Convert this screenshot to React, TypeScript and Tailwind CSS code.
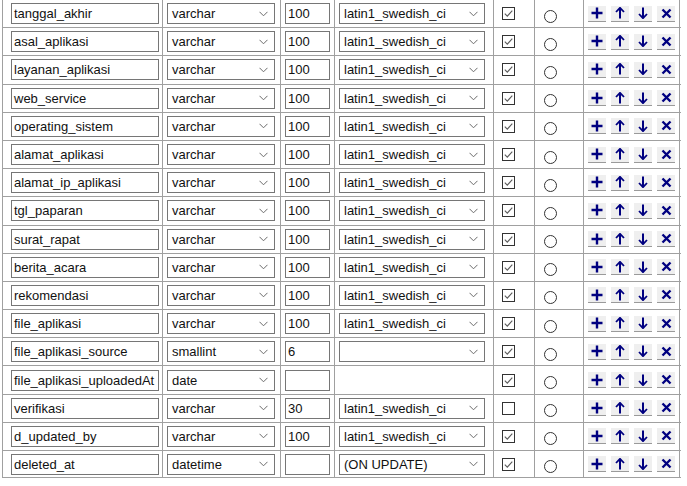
import React from "react";

type Row = {
  name: string;
  type: string;
  len: string;
  coll: string | null; // null = no select
  nul: boolean;
};

const rows: Row[] = [
  { name: "tanggal_akhir", type: "varchar", len: "100", coll: "latin1_swedish_ci", nul: true },
  { name: "asal_aplikasi", type: "varchar", len: "100", coll: "latin1_swedish_ci", nul: true },
  { name: "layanan_aplikasi", type: "varchar", len: "100", coll: "latin1_swedish_ci", nul: true },
  { name: "web_service", type: "varchar", len: "100", coll: "latin1_swedish_ci", nul: true },
  { name: "operating_sistem", type: "varchar", len: "100", coll: "latin1_swedish_ci", nul: true },
  { name: "alamat_aplikasi", type: "varchar", len: "100", coll: "latin1_swedish_ci", nul: true },
  { name: "alamat_ip_aplikasi", type: "varchar", len: "100", coll: "latin1_swedish_ci", nul: true },
  { name: "tgl_paparan", type: "varchar", len: "100", coll: "latin1_swedish_ci", nul: true },
  { name: "surat_rapat", type: "varchar", len: "100", coll: "latin1_swedish_ci", nul: true },
  { name: "berita_acara", type: "varchar", len: "100", coll: "latin1_swedish_ci", nul: true },
  { name: "rekomendasi", type: "varchar", len: "100", coll: "latin1_swedish_ci", nul: true },
  { name: "file_aplikasi", type: "varchar", len: "100", coll: "latin1_swedish_ci", nul: true },
  { name: "file_aplikasi_source", type: "smallint", len: "6", coll: "", nul: true },
  { name: "file_aplikasi_uploadedAt", type: "date", len: "", coll: null, nul: true },
  { name: "verifikasi", type: "varchar", len: "30", coll: "latin1_swedish_ci", nul: false },
  { name: "d_updated_by", type: "varchar", len: "100", coll: "latin1_swedish_ci", nul: true },
  { name: "deleted_at", type: "datetime", len: "", coll: "(ON UPDATE)", nul: true },
];

const font = { fontFamily: '"Liberation Sans", Arial, sans-serif' };

function Chevron() {
  return (
    <svg width="9" height="6" viewBox="0 0 9 6" className="absolute right-[6px] top-1/2 -translate-y-1/2">
      <path d="M0.5 0.8 L4.5 4.8 L8.5 0.8" fill="none" stroke="#6b6b6b" strokeWidth="1" />
    </svg>
  );
}

function SelectBox({ text, w }: { text: string; w: string }) {
  return (
    <div className={`relative h-[21px] ${w} border border-[#767676] bg-white text-[13px] leading-[19px] pl-[4px] text-[#111] whitespace-nowrap`}>
      {text}
      <Chevron />
    </div>
  );
}

function TextBox({ text, w }: { text: string; w: string }) {
  return (
    <div className={`h-[21px] ${w} border border-[#767676] bg-white text-[13px] leading-[19px] pl-[2px] text-[#111] whitespace-nowrap`}>
      {text}
    </div>
  );
}

function Check({ on }: { on: boolean }) {
  return (
    <div className="w-[13px] h-[13px] border border-[#333333] bg-white flex items-center justify-center">
      {on && (
        <svg width="11" height="11" viewBox="0 0 11 11">
          <path d="M1.8 5.6 L4.3 8.1 L9.3 2.6" fill="none" stroke="#5a5a5a" strokeWidth="1.1" />
        </svg>
      )}
    </div>
  );
}

function Radio() {
  return <div className="w-[13px] h-[13px] rounded-full border border-[#333333] bg-white mt-[5px]" />;
}

function Btn({ children }: { children: React.ReactNode }) {
  return (
    <div className="w-[18px] h-[16px] bg-[#efefef] border-b border-[#9a9a9a] flex items-center justify-center">
      {children}
    </div>
  );
}

const navy = "#000080";

function Plus() {
  return (
    <svg width="12" height="12" viewBox="0 0 12 12">
      <path d="M6 0.5 V11.5 M0.5 6 H11.5" stroke={navy} strokeWidth="2.4" />
    </svg>
  );
}
function Up() {
  return (
    <svg width="10" height="12" viewBox="0 0 10 12">
      <path d="M5 1.5 V11.5" stroke={navy} strokeWidth="2" />
      <path d="M1 5 L5 0.8 L9 5" fill="none" stroke={navy} strokeWidth="1.8" />
    </svg>
  );
}
function Down() {
  return (
    <svg width="10" height="12" viewBox="0 0 10 12">
      <path d="M5 0.5 V10.5" stroke={navy} strokeWidth="2" />
      <path d="M1 7 L5 11.2 L9 7" fill="none" stroke={navy} strokeWidth="1.8" />
    </svg>
  );
}
function Cross() {
  return (
    <svg width="11" height="11" viewBox="0 0 11 11">
      <path d="M1.5 1.5 L9.5 9.5 M9.5 1.5 L1.5 9.5" stroke={navy} strokeWidth="2.4" />
    </svg>
  );
}

export default function App() {
  return (
    <div className="w-[687px] h-[486px] bg-white overflow-hidden" style={font}>
      <div className="ml-[2px] w-[679px] -mt-[1px]">
        {rows.map((r, i) => (
          <div
            key={i}
            className="flex h-[28.19px] border-t border-b-0 border-l border-[#a0a0a0] last:border-b"
          >
            <div className="w-[160px] border-r border-[#a0a0a0] flex items-center pl-[8px]">
              <TextBox text={r.name} w="w-[148px]" />
            </div>
            <div className="w-[118px] border-r border-[#a0a0a0] flex items-center pl-[4px]">
              <SelectBox text={r.type} w="w-[108px]" />
            </div>
            <div className="w-[54px] border-r border-[#a0a0a0] flex items-center pl-[4px]">
              <TextBox text={r.len} w="w-[45px]" />
            </div>
            <div className="w-[159px] border-r border-[#a0a0a0] flex items-center pl-[4px]">
              {r.coll !== null && <SelectBox text={r.coll} w="w-[146px]" />}
            </div>
            <div className="w-[41px] border-r border-[#a0a0a0] flex items-center pl-[8px]">
              <Check on={r.nul} />
            </div>
            <div className="w-[49px] border-r border-[#a0a0a0] flex items-center pl-[9px]">
              <Radio />
            </div>
            <div className="w-[96px] border-r border-[#a0a0a0] flex items-center pl-[4px] gap-[5px]">
              <Btn><Plus /></Btn>
              <Btn><Up /></Btn>
              <Btn><Down /></Btn>
              <Btn><Cross /></Btn>
            </div>
          </div>
        ))}
      </div>
    </div>
  );
}
